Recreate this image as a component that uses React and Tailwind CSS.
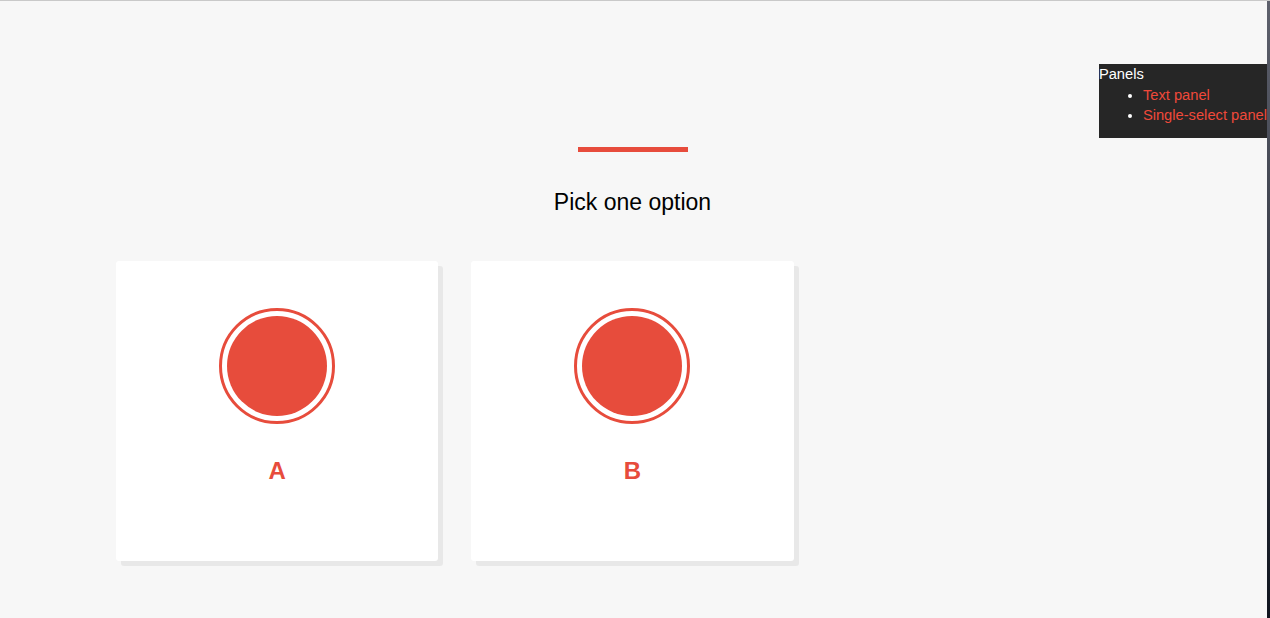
export default function App() {
  const options = ["A", "B"];

  return (
    <div
      className="relative flex h-[618px] w-full overflow-hidden border-t border-[#c9c9c9] bg-[#f7f7f7]"
      style={{ fontFamily: '"Liberation Sans", Arial, sans-serif' }}
    >
      {/* main question area */}
      <main className="flex-1 pr-[2px] pt-[146px]">
        <div className="mx-auto h-[5px] w-[110px] bg-[#e74c3c]" />
        <h1 className="mt-[37px] text-center text-[23px] font-normal leading-[26px] text-black">
          Pick one option
        </h1>

        <div className="mx-auto mt-[46px] grid w-[1033px] grid-cols-3 gap-[33px]">
          {options.map((label) => (
            <div
              key={label}
              className="flex h-[300px] flex-col items-center rounded-[3px] bg-white pt-[47px] shadow-[5px_5px_0_#e8e8e8]"
            >
              <div className="flex h-[116px] w-[116px] items-center justify-center rounded-full border-[3px] border-[#e74c3c] bg-white">
                <div className="h-[100px] w-[100px] rounded-full bg-[#e74c3c]" />
              </div>
              <span className="mt-[33px] text-[24px] font-bold leading-[28px] text-[#e74c3c]">
                {label}
              </span>
            </div>
          ))}
        </div>
      </main>

      {/* window edge */}
      <div className="w-[3px] bg-gradient-to-b from-[#5e616d] to-[#10151f]" />

      {/* panels menu */}
      <nav className="absolute right-[3px] top-[63px] whitespace-nowrap bg-[#262626] pb-[12px] text-[14.7px] leading-[20.5px] text-white">
        <div>Panels</div>
        <ul className="list-disc pl-[44px]">
          <li>
            <a className="text-[#f0493a]">Text panel</a>
          </li>
          <li>
            <a className="text-[#f0493a]">Single-select panel</a>
          </li>
        </ul>
      </nav>
    </div>
  );
}
